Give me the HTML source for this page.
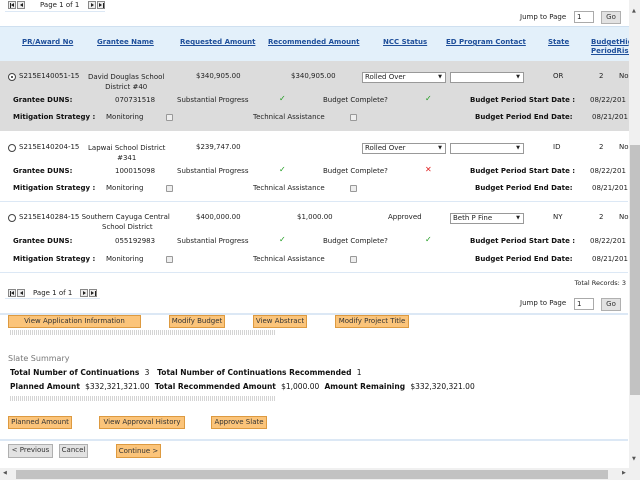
<!DOCTYPE html>
<html><head><style>
*{margin:0;padding:0;box-sizing:border-box}
body{width:640px;height:480px;overflow:hidden;background:#fff;font-family:"DejaVu Sans","Liberation Sans",sans-serif;font-size:7px;color:#222;position:relative}
.a{position:absolute;white-space:nowrap}
.b{font-weight:bold;color:#111}
.h{position:absolute;color:#1f4f9a;font-weight:bold;text-decoration:underline;font-size:7px;white-space:nowrap}
.btn{position:absolute;height:13px;background:#fbc47a;border:1px solid #dd9a40;font-size:7px;line-height:11px;text-align:center;color:#333}
.gb{position:absolute;height:14px;background:#e2e2e2;border:1px solid #b0b0b0;font-size:7px;line-height:11px;text-align:center;color:#333}
.sel{position:absolute;height:11px;background:#fff;border:1px solid #999;font-size:7px;line-height:9px;padding-left:2px}
.sel:after{content:"▼";position:absolute;right:3px;top:0;font-size:5px}
.cb{position:absolute;width:7px;height:7px;border:1px solid #999;border-radius:1px;background:#eee}
.rad{position:absolute;width:8px;height:8px;border:1px solid #444;border-radius:50%;background:#fff}
.ok{position:absolute;color:#1a9a1a;font-size:8px;font-weight:bold}
.pg{position:absolute;width:8px;height:8px;border:1px solid #888;background:#eee;overflow:hidden}
.pg i{position:absolute;top:1px;width:0;height:0;border-top:2.5px solid transparent;border-bottom:2.5px solid transparent}
.pg i.l{left:2px;border-right:3px solid #222}
.pg i.r{left:2px;border-left:3px solid #222}
.pg b{position:absolute;top:1px;width:1px;height:5px;background:#222}
.dot{position:absolute;height:5px;background:repeating-linear-gradient(90deg,#d4d4d4 0 1px,#fff 1px 2px)}
.line{position:absolute;left:0;width:628px;height:2px;background:#dce8f5}
</style></head><body>
<div class="pg" style="left:8px;top:1px"><b style="left:1px"></b><i class="l" style="left:2px"></i></div><div class="pg" style="left:17px;top:1px"><i class="l"></i></div>
<div class="a" style="left:40px;top:1px">Page 1 of 1</div>
<div class="pg" style="left:88px;top:1px"><i class="r"></i></div><div class="pg" style="left:97px;top:1px"><i class="r" style="left:1px"></i><b style="left:5px"></b></div>
<div style="position:absolute;left:5px;top:11px;width:100px;height:1px;background:#dce8f5"></div>
<div class="a" style="left:520px;top:13px">Jump to Page</div>
<div class="a" style="left:574px;top:11px;width:20px;height:12px;border:1px solid #aaa;padding-left:2px;line-height:10px">1</div>
<div class="gb" style="left:601px;top:11px;width:20px;height:13px">Go</div>
<div style="position:absolute;left:0;top:26px;width:629px;height:35px;background:#e3f0fa;border-top:1px solid #cfe0f0"></div>
<div class="h" style="left:22px;top:38px">PR/Award No</div>
<div class="h" style="left:97px;top:38px">Grantee Name</div>
<div class="h" style="left:180px;top:38px">Requested Amount</div>
<div class="h" style="left:268px;top:38px">Recommended Amount</div>
<div class="h" style="left:383px;top:38px">NCC Status</div>
<div class="h" style="left:446px;top:38px">ED Program Contact</div>
<div class="h" style="left:548px;top:38px">State</div>
<div class="h" style="left:591px;top:38px;line-height:9px">BudgetHigh<br>PeriodRisk</div>
<div style="position:absolute;left:0;top:61px;width:629px;height:70px;background:#dcdcdc"></div>

<div class="rad" style="left:8px;top:73px"><div style="position:absolute;left:2px;top:2px;width:2px;height:2px;background:#222;border-radius:50%"></div></div>
<div class="a" style="left:19px;top:72px">S215E140051-15</div>
<div class="a" style="left:88px;top:72px;text-align:center;line-height:10px">David Douglas School<br>District #40</div>
<div class="a" style="left:196px;top:72px">$340,905.00</div>
<div class="a" style="left:291px;top:72px">$340,905.00</div>
<div class="sel" style="left:362px;top:72px;width:84px">Rolled Over</div>
<div class="sel" style="left:450px;top:72px;width:74px"></div>
<div class="a" style="left:553px;top:72px">OR</div>
<div class="a" style="left:599px;top:72px">2</div><div class="a" style="left:619px;top:72px">No</div>
<div class="a b" style="left:13px;top:96px">Grantee DUNS:</div>
<div class="a" style="left:115px;top:96px">070731518</div>
<div class="a" style="left:177px;top:96px">Substantial Progress</div>
<div class="ok" style="left:279px;top:94px">✓</div>
<div class="a" style="left:323px;top:96px">Budget Complete?</div>
<div class="ok" style="left:425px;top:94px">✓</div>
<div class="a b" style="left:470px;top:96px">Budget Period Start Date :</div>
<div class="a" style="left:590px;top:96px">08/22/201</div>
<div class="a b" style="left:13px;top:113px">Mitigation Strategy :</div>
<div class="a" style="left:106px;top:113px">Monitoring</div>
<div class="cb" style="left:166px;top:114px"></div>
<div class="a" style="left:253px;top:113px">Technical Assistance</div>
<div class="cb" style="left:350px;top:114px"></div>
<div class="a b" style="left:475px;top:113px">Budget Period End Date:</div>
<div class="a" style="left:592px;top:113px">08/21/201</div>

<div class="rad" style="left:8px;top:144px"></div>
<div class="a" style="left:19px;top:143px">S215E140204-15</div>
<div class="a" style="left:88px;top:143px;text-align:center;line-height:10px">Lapwai School District<br>#341</div>
<div class="a" style="left:196px;top:143px">$239,747.00</div>
<div class="sel" style="left:362px;top:143px;width:84px">Rolled Over</div>
<div class="sel" style="left:450px;top:143px;width:74px"></div>
<div class="a" style="left:553px;top:143px">ID</div>
<div class="a" style="left:599px;top:143px">2</div><div class="a" style="left:619px;top:143px">No</div>
<div class="a b" style="left:13px;top:167px">Grantee DUNS:</div>
<div class="a" style="left:115px;top:167px">100015098</div>
<div class="a" style="left:177px;top:167px">Substantial Progress</div>
<div class="ok" style="left:279px;top:165px">✓</div>
<div class="a" style="left:323px;top:167px">Budget Complete?</div>
<div class="ok" style="left:425px;top:165px;color:#e02020">✕</div>
<div class="a b" style="left:470px;top:167px">Budget Period Start Date :</div>
<div class="a" style="left:590px;top:167px">08/22/201</div>
<div class="a b" style="left:13px;top:184px">Mitigation Strategy :</div>
<div class="a" style="left:106px;top:184px">Monitoring</div>
<div class="cb" style="left:166px;top:185px"></div>
<div class="a" style="left:253px;top:184px">Technical Assistance</div>
<div class="cb" style="left:350px;top:185px"></div>
<div class="a b" style="left:475px;top:184px">Budget Period End Date:</div>
<div class="a" style="left:592px;top:184px">08/21/201</div>
<div class="line" style="top:201px;height:1px"></div>

<div class="rad" style="left:8px;top:214px"></div>
<div class="a" style="left:19px;top:213px">S215E140284-15 Southern Cayuga Central</div>
<div class="a" style="left:102px;top:223px">School District</div>
<div class="a" style="left:196px;top:213px">$400,000.00</div>
<div class="a" style="left:297px;top:213px">$1,000.00</div>
<div class="a" style="left:388px;top:213px">Approved</div>
<div class="sel" style="left:450px;top:213px;width:74px">Beth P Fine</div>
<div class="a" style="left:553px;top:213px">NY</div>
<div class="a" style="left:599px;top:213px">2</div><div class="a" style="left:619px;top:213px">No</div>
<div class="a b" style="left:13px;top:237px">Grantee DUNS:</div>
<div class="a" style="left:115px;top:237px">055192983</div>
<div class="a" style="left:177px;top:237px">Substantial Progress</div>
<div class="ok" style="left:279px;top:235px">✓</div>
<div class="a" style="left:323px;top:237px">Budget Complete?</div>
<div class="ok" style="left:425px;top:235px">✓</div>
<div class="a b" style="left:470px;top:237px">Budget Period Start Date :</div>
<div class="a" style="left:590px;top:237px">08/22/201</div>
<div class="a b" style="left:13px;top:255px">Mitigation Strategy :</div>
<div class="a" style="left:106px;top:255px">Monitoring</div>
<div class="cb" style="left:166px;top:256px"></div>
<div class="a" style="left:253px;top:255px">Technical Assistance</div>
<div class="cb" style="left:350px;top:256px"></div>
<div class="a b" style="left:475px;top:255px">Budget Period End Date:</div>
<div class="a" style="left:592px;top:255px">08/21/201</div>
<div class="line" style="top:272px;height:1px"></div>

<div class="a" style="right:14px;top:279px;font-size:6.5px">Total Records: 3</div>
<div class="pg" style="left:8px;top:289px"><b style="left:1px"></b><i class="l" style="left:2px"></i></div><div class="pg" style="left:17px;top:289px"><i class="l"></i></div>
<div class="a" style="left:33px;top:289px">Page 1 of 1</div>
<div class="pg" style="left:80px;top:289px"><i class="r"></i></div><div class="pg" style="left:89px;top:289px"><i class="r" style="left:1px"></i><b style="left:5px"></b></div>
<div style="position:absolute;left:5px;top:298px;width:95px;height:1px;background:#dce8f5"></div>
<div class="a" style="left:520px;top:299px">Jump to Page</div>
<div class="a" style="left:574px;top:298px;width:20px;height:12px;border:1px solid #aaa;padding-left:2px;line-height:10px">1</div>
<div class="gb" style="left:601px;top:298px;width:20px;height:13px">Go</div>
<div class="line" style="top:313px"></div>
<div class="btn" style="left:8px;top:315px;width:133px">View Application Information</div>
<div class="btn" style="left:169px;top:315px;width:56px">Modify Budget</div>
<div class="btn" style="left:253px;top:315px;width:54px">View Abstract</div>
<div class="btn" style="left:335px;top:315px;width:74px">Modify Project Title</div>
<div class="dot" style="left:10px;top:330px;width:266px"></div>
<div class="a" style="left:8px;top:354px;color:#777;font-size:8px">Slate Summary</div>
<div class="a b" style="left:10px;top:368px;font-size:7.5px">Total Number of Continuations &nbsp;<span style="font-weight:normal">3</span>&nbsp;&nbsp; Total Number of Continuations Recommended &nbsp;<span style="font-weight:normal">1</span></div>
<div class="a b" style="left:10px;top:382px;font-size:7.5px">Planned Amount &nbsp;<span style="font-weight:normal">$332,321,321.00</span>&nbsp; Total Recommended Amount &nbsp;<span style="font-weight:normal">$1,000.00</span>&nbsp; Amount Remaining &nbsp;<span style="font-weight:normal">$332,320,321.00</span></div>
<div class="dot" style="left:10px;top:396px;width:266px"></div>
<div class="btn" style="left:8px;top:416px;width:64px">Planned Amount</div>
<div class="btn" style="left:99px;top:416px;width:86px">View Approval History</div>
<div class="btn" style="left:211px;top:416px;width:56px">Approve Slate</div>
<div class="line" style="top:439px"></div>
<div class="gb" style="left:8px;top:444px;width:45px">&lt; Previous</div>
<div class="gb" style="left:59px;top:444px;width:29px">Cancel</div>
<div class="btn" style="left:116px;top:444px;width:45px;height:14px;line-height:12px">Continue &gt;</div>

<div style="position:absolute;left:629px;top:0;width:11px;height:468px;background:#f0f0f0"></div>
<div class="a" style="left:632px;top:8px;font-size:5px;color:#555">▲</div>
<div style="position:absolute;left:630px;top:145px;width:10px;height:250px;background:#c2c2c2"></div>
<div class="a" style="left:632px;top:456px;font-size:5px;color:#555">▼</div>
<div style="position:absolute;left:0;top:468px;width:640px;height:12px;background:#f0f0f0"></div>
<div style="position:absolute;left:16px;top:470px;width:592px;height:9px;background:#c2c2c2"></div>
<div class="a" style="left:3px;top:470px;font-size:5px;color:#555">◀</div>
<div class="a" style="left:622px;top:470px;font-size:5px;color:#555">▶</div>
</body></html>
